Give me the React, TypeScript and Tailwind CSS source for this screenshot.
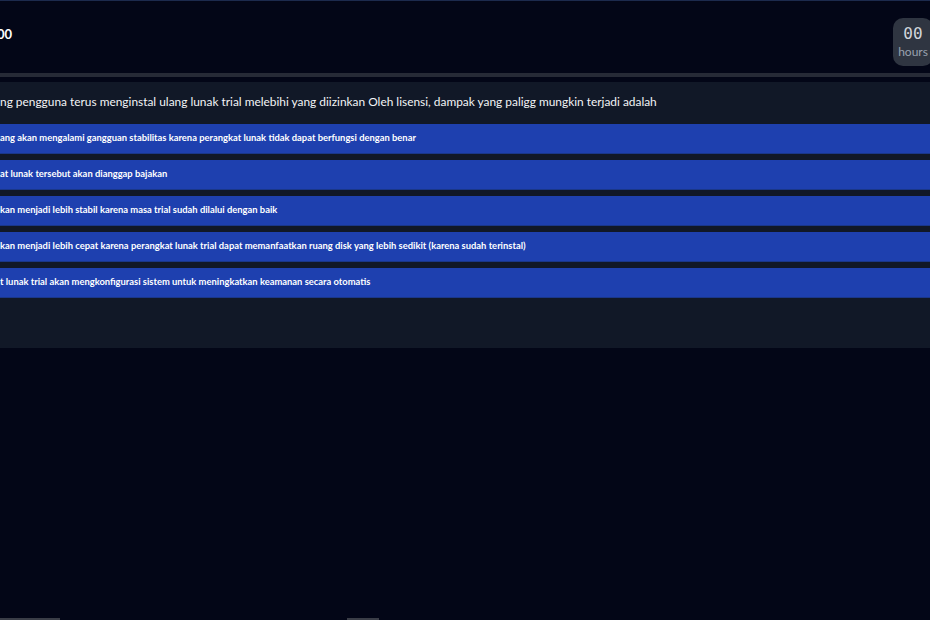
import React from 'react';

const options = [
    'ang akan mengalami gangguan stabilitas karena perangkat lunak tidak dapat berfungsi dengan benar',
    'at lunak tersebut akan dianggap bajakan',
    'kan menjadi lebih stabil karena masa trial sudah dilalui dengan baik',
    'kan menjadi lebih cepat karena perangkat lunak trial dapat memanfaatkan ruang disk yang lebih sedikit (karena sudah terinstal)',
    't lunak trial akan mengkonfigurasi sistem untuk meningkatkan keamanan secara otomatis',
];

const App = () => {
    return (
        <div className="h-screen bg-[#030617] flex flex-col overflow-hidden font-['Lato',sans-serif]">
            <div className="h-px bg-[#1c2a4d]" />

            {/* Header */}
            <div className="h-[72px] flex items-start justify-between">
                <span className="mt-[25px] text-[13px] leading-4 font-bold text-white -ml-[3px]">00</span>
                <div className="mt-[17px] w-[40px] h-[48px] -mr-[3px] rounded-[10px] bg-[#2f3541] flex flex-col items-center justify-center">
                    <span className="font-['DejaVu_Sans_Mono',monospace] text-[16px] leading-5 text-gray-300">00</span>
                    <span className="text-[12px] leading-4 text-gray-400">hours</span>
                </div>
            </div>
            <div className="h-[4px] bg-[#262a36]" />
            <div className="h-[5px]" />

            {/* Question card */}
            <div className="bg-[#111827] pt-[10px] pb-[50px]">
                <p className="text-[11.9px] leading-5 text-gray-100 mb-[12px]">
                    ng pengguna terus menginstal ulang lunak trial melebihi yang diizinkan Oleh lisensi, dampak yang paligg mungkin terjadi adalah
                </p>
                <div className="flex flex-col gap-[6px]">
                    {options.map((o) => (
                        <div key={o} className="h-[30px] flex items-center bg-[#1e40af] border-b border-[#1a3789] text-[9.4px] font-bold text-white whitespace-nowrap">
                            {o}
                        </div>
                    ))}
                </div>
            </div>

            <div className="flex-1" />
            <div className="h-[2px] flex">
                <div className="w-[60px] bg-[#3a3d47]" />
                <div className="w-[287px]" />
                <div className="w-[32px] bg-[#3a3d47]" />
            </div>
        </div>
    );
};

export default App;
